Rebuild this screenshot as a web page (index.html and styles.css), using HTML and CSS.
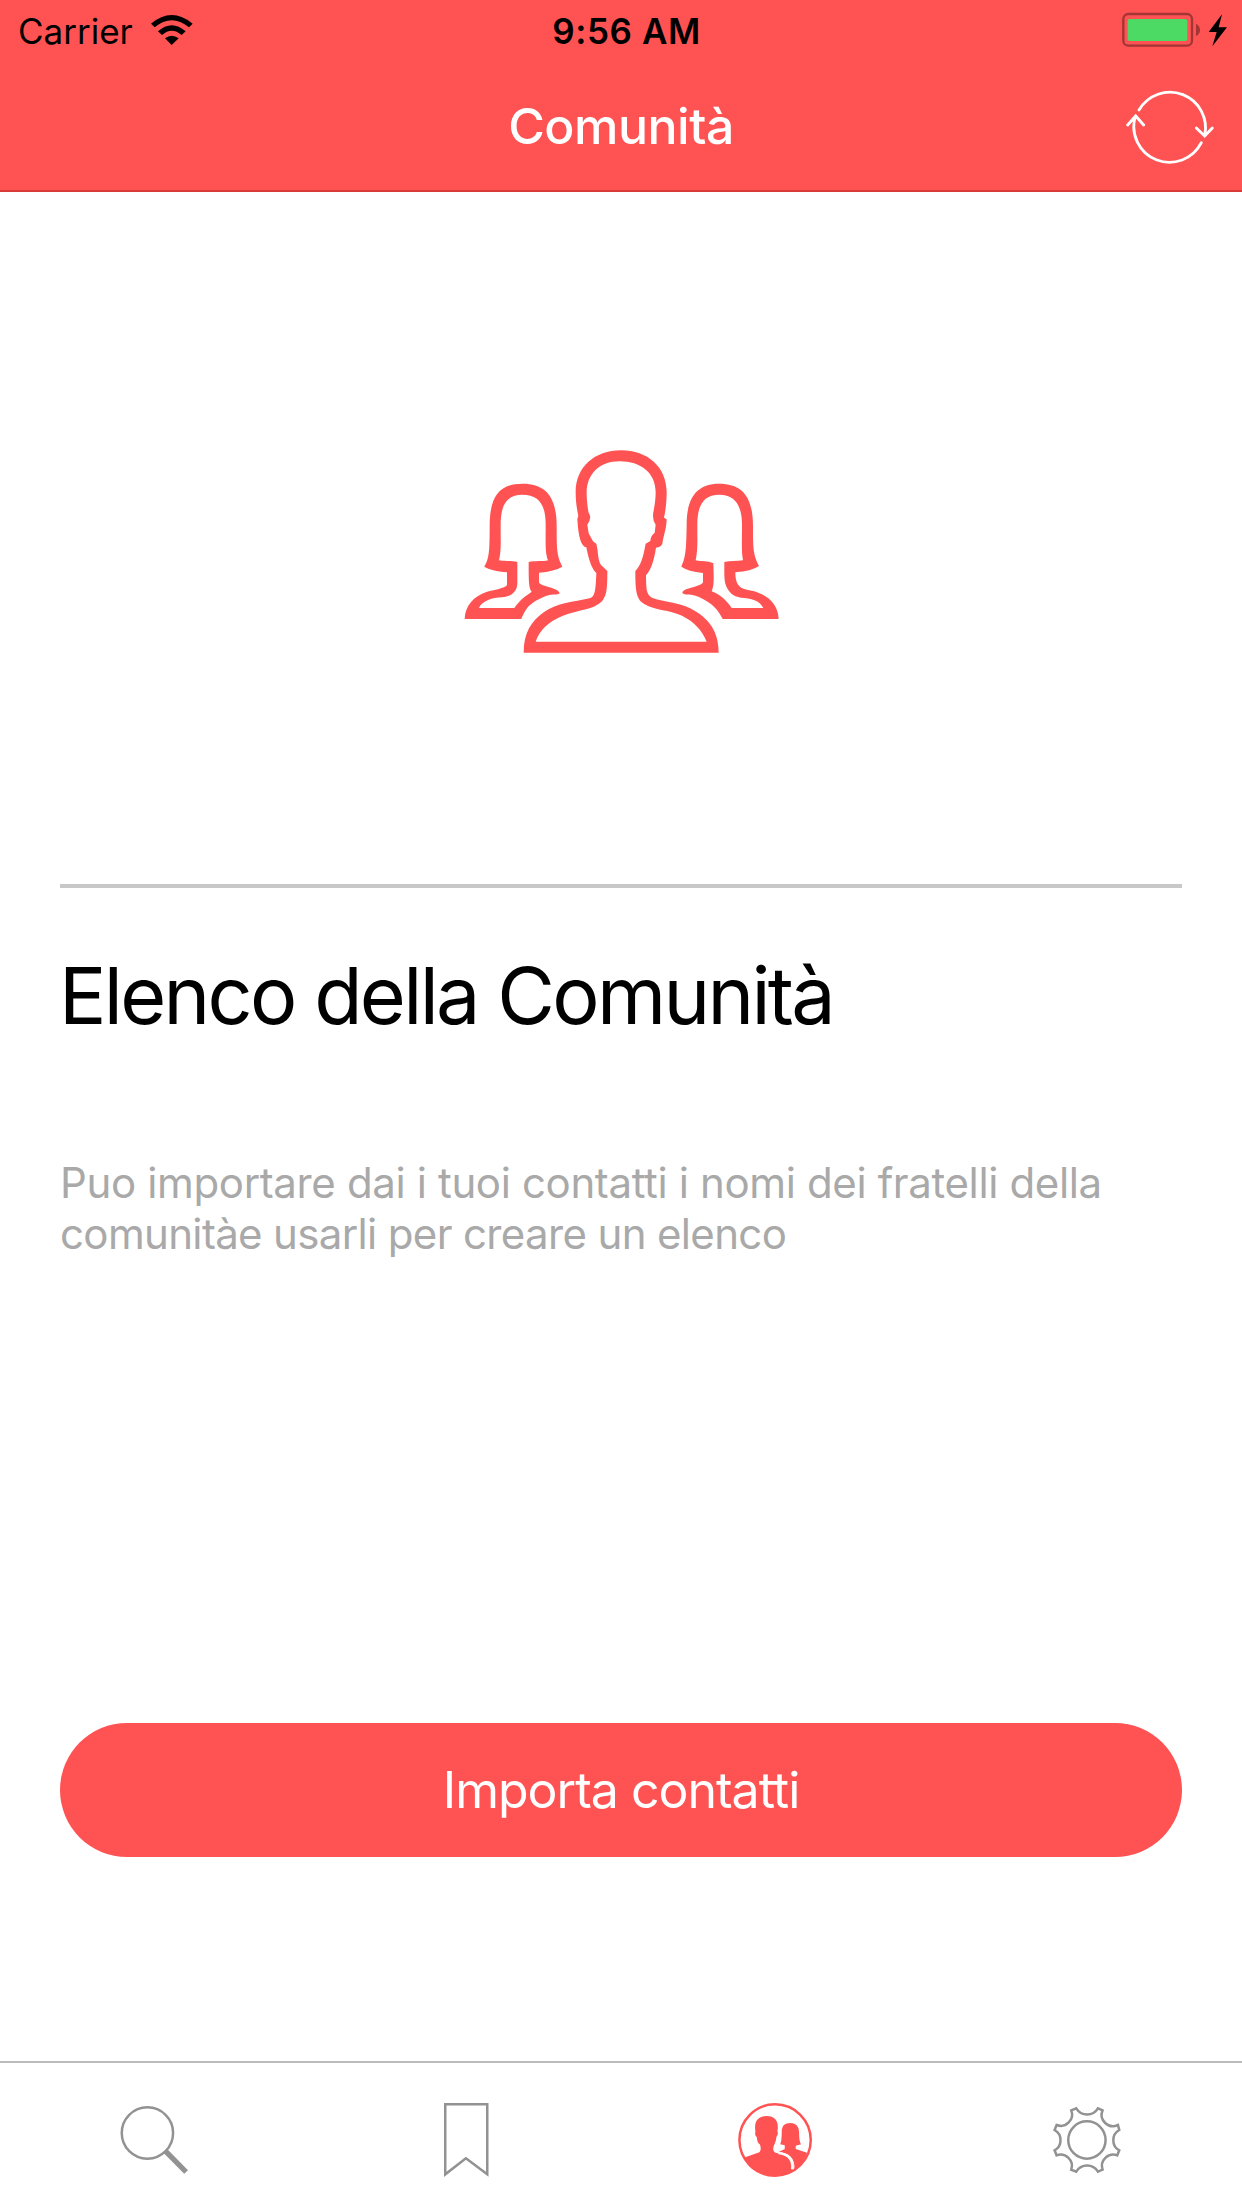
FILE: index.html
```html
<!DOCTYPE html>
<html lang="it">
<head>
<meta charset="utf-8">
<title>Comunità</title>
<link rel="stylesheet" href="styles.css">
</head>
<body>
<div class="screen">
  <header class="top">
    <div class="status">
      <div class="status-left">
        <span class="carrier">Carrier</span>
        <svg class="wifi" viewBox="448 42 132 96">
          <path d="M451 71Q513 19 576 71L565 82Q513 39 462 82Z"/>
          <path d="M472 94Q513 58 555 94L543 105Q513 79 484 105Z"/>
          <path d="M493 115Q513 100 534 115L513 135Z"/>
        </svg>
      </div>
      <span class="clock">9:56 AM</span>
      <div class="status-right">
        <svg class="battery" viewBox="90 36 318 108">
          <rect class="battery-case" x="94" y="42" width="206" height="95" rx="15"/>
          <rect class="battery-level" x="107" y="57" width="179" height="66" rx="7"/>
          <path class="battery-tip" d="M312 71Q324 78 324 90T312 109Z"/>
          <path d="M390 43L350 96H374L361 139L405 82H380Z"/>
        </svg>
      </div>
    </div>
    <div class="nav">
      <h1 class="nav-title">Comunità</h1>
      <svg class="refresh" viewBox="98 261 270 240">
        <path d="M140 333A107 107 0 0 1 337 410M312 387L337 411L360 387"/>
        <path d="M327 431A107 107 0 0 1 129 352M106 378L130 351L154 378"/>
      </svg>
    </div>
  </header>
  <main class="content">
    <div class="hero">
      <svg class="people" viewBox="40 55 952 618">
        <path fill-rule="evenodd" d="M222 669C222 610 245 574 282 548C324 518 370 518 420 506C435 501 438 488 440 430C428 420 418 396 410 353C395 350 386 325 383 267L386 259C380 230 378 210 378 188C378 112 435 62 514 62C594 62 651 112 651 188C651 210 649 238 643 264L651 269C650 300 642 315 638 342Q634 352 619 354C614 385 607 418 589 437C590 482 590 493 607 504C640 517 682 516 720 535C780 565 807 607 807 669ZM258 636H771C758 603 734 576 697 558C655 540 622 544 585 524C560 509 557 485 557 424C574 405 580 385 588 342L602 334Q603 318 615 309L618 285Q607 270 611 248C615 228 618 207 618 187C618 130 573 95 510 95C449 95 411 134 411 190C411 213 414 235 417 250Q428 264 413 285L417 311L430 335L440 342C446 365 444 390 454 406L473 424C473 480 471 495 458 514C430 542 385 540 340 558Q275 584 258 636Z"/>
        <path fill-rule="evenodd" d="M45 568C46 530 70 500 112 486C145 478 170 474 172 465V428C140 425 118 420 104 411C119 387 120 360 120 290C120 205 145 162 219 162C294 162 321 209 321 290C321 365 322 378 338 411Q315 425 268 429V459C280 473 327 473 330 491C320 499 304 490 280 503C235 523 229 538 215 568ZM88 535H194C211 509 231 497 246 486C238 474 237 465 237 397C255 393 279 396 295 392C286 370 288 340 288 285C288 225 268 195 218 195C168 195 153 230 153 285C153 340 155 363 148 392C170 396 187 392 203 397V460C203 487 184 500 158 503C128 504 98 513 88 535Z"/>
        <path fill-rule="evenodd" d="M987 568C986 530 961 500 918 486C885 478 857 482 857 428Q905 425 928 409C911 375 910 360 910 290C910 205 881 162 808 162C738 162 711 209 711 284C710 360 708 383 695 411Q715 425 760 430V458C752 473 701 474 698 489C703 499 727 490 748 502C790 521 807 543 819 568ZM941 535H846C830 512 810 494 786 485C793 466 793 455 791 401C775 393 755 396 738 392C745 360 743 330 743 285C743 225 763 195 808 195C858 195 877 230 877 285C877 340 875 365 880 392C860 396 842 392 824 397C824 430 823 450 828 465C835 486 850 500 874 504C904 506 930 512 941 535Z"/>
      </svg>
    </div>
    <hr class="rule">
    <h2 class="heading">Elenco della Comunità</h2>
    <p class="text">
      <span class="line">Puo importare dai i tuoi contatti i nomi dei fratelli della</span>
      <span class="line tight">comunitàe usarli per creare un elenco</span>
    </p>
    <button class="import">Importa contatti</button>
  </main>
  <nav class="tabs">
    <a class="tab"><svg viewBox="-14.25 90 360 360"><circle cx="143" cy="249" r="77"/><path class="handle" d="M198 304L259 366"/></svg></a>
    <a class="tab"><svg viewBox="-42.75 90 360 360"><path d="M75 163H201V373L137 325L75 373Z"/></svg></a>
    <a class="tab active"><svg viewBox="-11.25 0 360 360">
      <circle cx="166" cy="180" r="107"/>
      <path class="solid" d="M72 233L119 217C124 211 124 202 120 193C114 190 112 181 111 171Q104 167 107 155C102 124 114 108 141 108S178 126 173 154Q177 162 170 171C169 185 164 192 162 198C158 211 162 216 170 219C190 224 207 228 215 240Q223 251 222 269Q200 286 166 287C120 287 85 267 72 233Z"/>
      <path class="solid" d="M175 217L195 207V196L181 193Q186 185 186 156C186 137 195 129 212 129S238 140 238 158Q238 184 244 193L228 197V207L262 218Q253 249 224 268C226 235 208 218 175 217Z"/>
      <path class="gap" d="M176 219C206 222 221 236 218 268"/>
    </svg></a>
    <a class="tab"><svg viewBox="-9.75 0 360 360"><circle cx="170" cy="180" r="56"/><path d="M123 91L138 85A38 38 0 0 0 203 85L217 91A34 34 0 0 0 263 135L267 150A35 35 0 0 0 267 211L261 226A34 34 0 0 0 217 269L203 275A38 38 0 0 0 138 275L123 269A34 34 0 0 0 79 226L73 211A35 35 0 0 0 73 150L79 135A34 34 0 0 0 123 91Z"/></svg></a>
  </nav>
</div>
</body>
</html>
```

FILE: styles.css
```css
* { box-sizing: border-box; margin: 0; padding: 0; }

body {
  font-family: Inter, "Liberation Sans", sans-serif;
  font-feature-settings: "calt" 0;
  background: #fff;
  color: #000;
}

.screen {
  width: 1242px;
  height: 2208px;
  display: flex;
  flex-direction: column;
}

.top {
  height: 192px;
  background: #ff5353;
  border-bottom: 2px solid #d93a3a;
}

.status {
  height: 62px;
  padding: 0 14px 0 18px;
  display: grid;
  grid-template-columns: 1fr auto 1fr;
  align-items: center;
  font-size: 35px;
}

.status-left { display: flex; align-items: center; gap: 17px; }
.status-right { display: flex; justify-content: flex-end; }
.clock { padding-left: 7px; font-weight: 600; letter-spacing: 0.6px; }
.wifi { width: 44px; height: 32px; margin-bottom: 2px; }
.battery { width: 106px; height: 36px; margin-bottom: 2px; }
.battery-case { fill: none; stroke: #a33535; stroke-width: 7; }
.battery-level { fill: #4cd964; }
.battery-tip { fill: #a33535; }

.nav {
  height: 128px;
  padding: 0 27px;
  display: grid;
  grid-template-columns: 90px 1fr 90px;
  align-items: center;
  color: #fff;
}

.nav-title {
  grid-column: 2;
  font-size: 50px;
  font-weight: 500;
  letter-spacing: -0.5px;
  text-align: center;
}

.refresh {
  width: 90px;
  height: 80px;
  fill: none;
  stroke: #fff;
  stroke-width: 8.5;
  stroke-linecap: round;
}

.content {
  flex: 1;
  padding: 0 60px;
}

.hero {
  height: 692px;
  padding-top: 256px;
}

.people {
  display: block;
  width: 317.33px;
  height: 206px;
  margin-left: 403.33px;
  fill: #ff5353;
}

.rule { height: 4px; border: 0; background: #c8c8c8; }

.heading {
  margin: 57px 0 0 -1px;
  font-size: 79px;
  font-weight: 400;
  line-height: 100px;
  letter-spacing: -2.7px;
}

.text {
  margin-top: 112px;
  font-size: 42px;
  line-height: 51px;
  letter-spacing: -0.36px;
  color: #a9a9a9;
  white-space: nowrap;
}

.line { display: block; }
.line.tight { letter-spacing: -0.65px; }

.import {
  display: block;
  width: 100%;
  height: 134px;
  margin-top: 464px;
  border: 0;
  border-radius: 67px;
  background: #ff5353;
  color: #fff;
  font: 400 50px Inter, "Liberation Sans", sans-serif;
  font-feature-settings: "calt" 0;
  letter-spacing: -1px;
}

.tabs {
  height: 147px;
  padding-top: 17px;
  border-top: 2px solid #bcbcbc;
  display: grid;
  grid-template-columns: repeat(4, 1fr);
}

.tab { display: flex; justify-content: center; }

.tab svg {
  width: 120px;
  height: 120px;
  fill: none;
  stroke: #929292;
  stroke-width: 7.5;
}

.tab .handle { stroke-width: 16; }
.tab.active svg { stroke: #ff5353; }
.tab .solid { fill: #ff5353; stroke: none; }
.tab .gap { stroke: #fff; stroke-width: 8; }
```
